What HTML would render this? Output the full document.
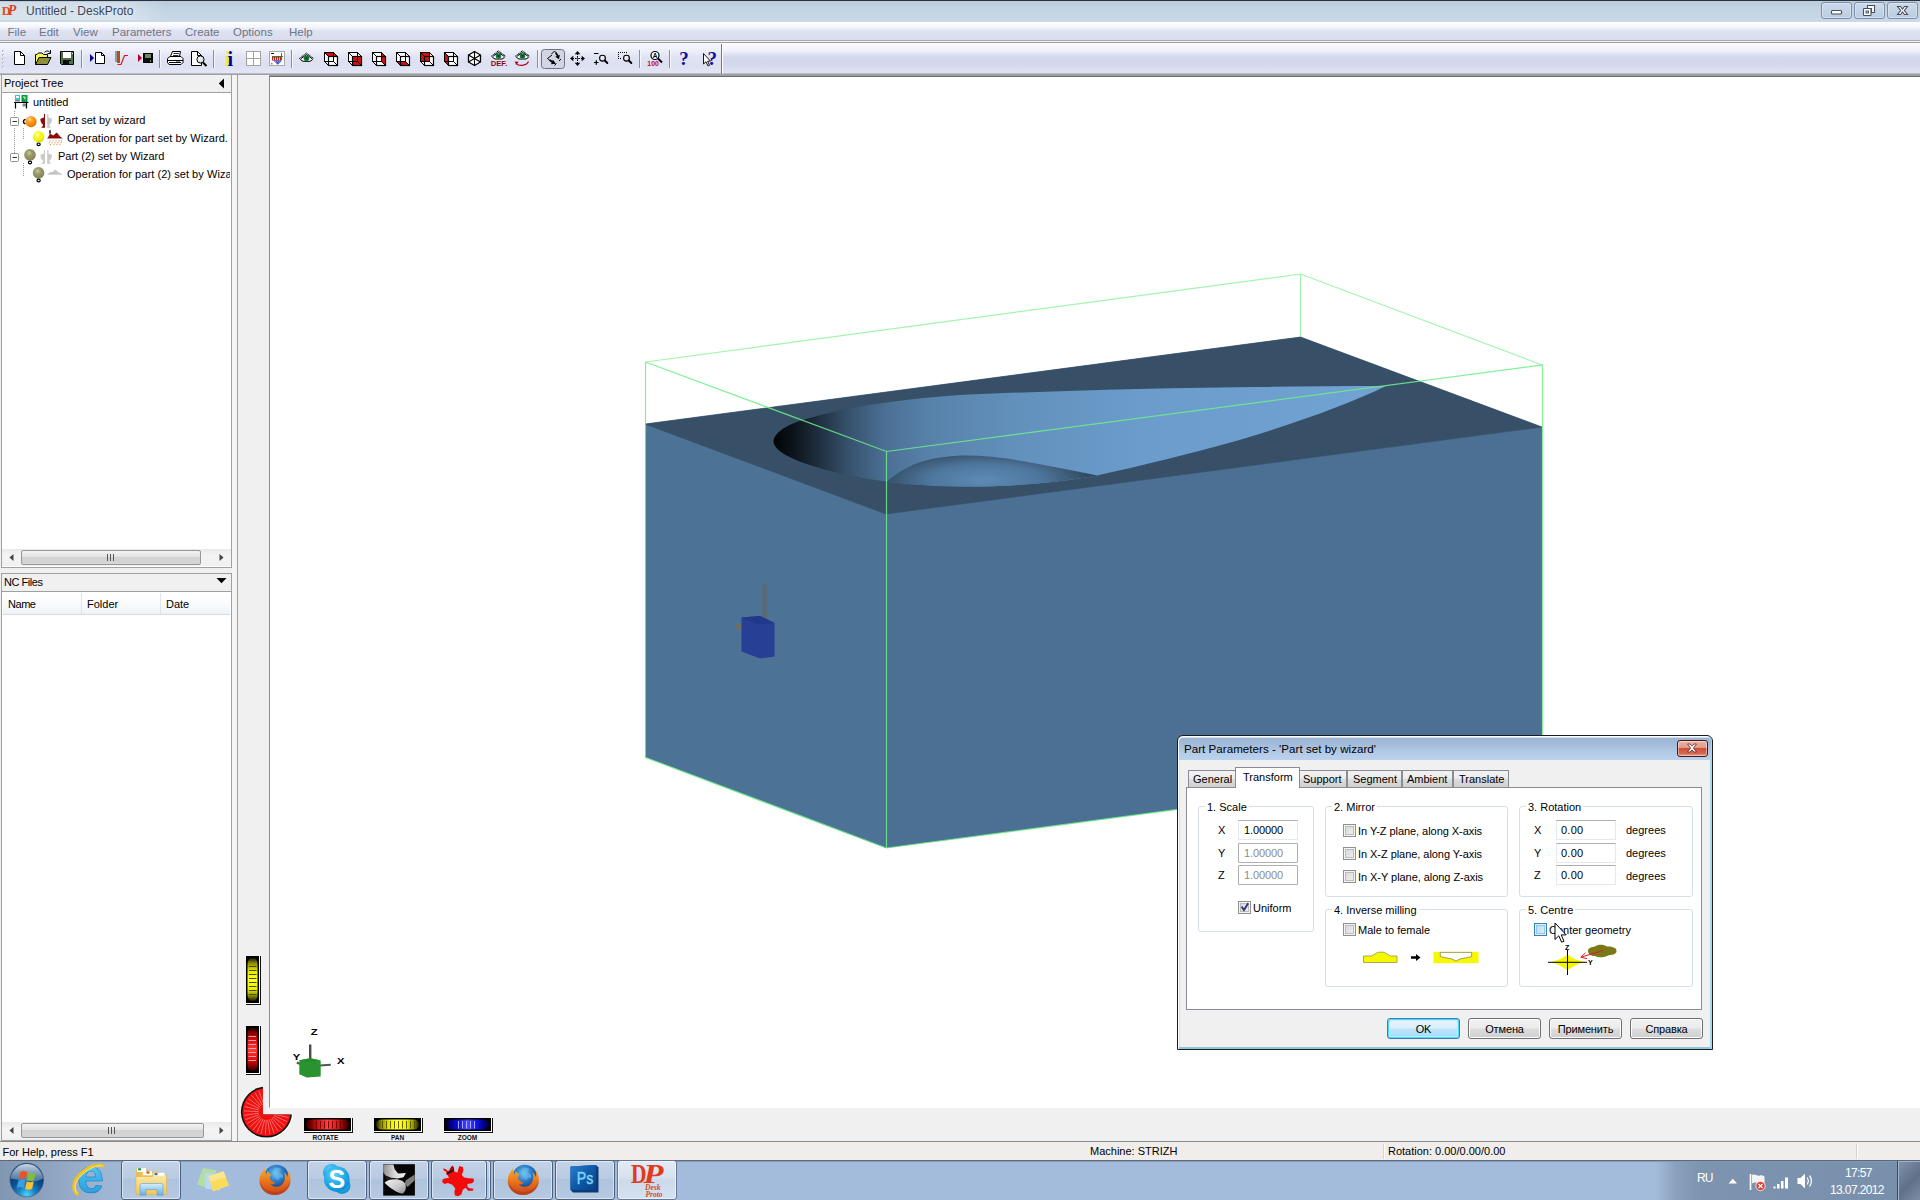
<!DOCTYPE html>
<html lang="en">
<head>
<meta charset="utf-8">
<title>Untitled - DeskProto</title>
<style>
html,body{margin:0;padding:0;}
body{width:1920px;height:1200px;overflow:hidden;background:#fff;font-family:"Liberation Sans",sans-serif;font-size:11px;color:#000;position:relative;}
.a{position:absolute;}
.t{position:absolute;white-space:pre;line-height:13px;}
svg{position:absolute;overflow:visible;}
/* title bar */
#titlebar{left:0;top:0;width:1920px;height:22px;background:linear-gradient(#2b313b 0,#2b313b 1px,#b9cbdd 1px,#c3d4e3 10px,#c9d9e7 21px);}
#title{left:26px;top:4px;font-size:12px;line-height:14px;color:#3a4658;text-shadow:0 0 3px #e8f0f8;}
.cap{position:absolute;top:2px;height:15px;width:29px;border:1px solid #7d8ea8;border-radius:3px;background:linear-gradient(#cbd9ea,#bccde2);box-shadow:inset 0 0 0 1px rgba(255,255,255,.35);}
/* menu */
#menubar{left:0;top:22px;width:1920px;height:18px;background:linear-gradient(#ffffff 0,#f4f5fc 5px,#dfe2f1 9px,#d9ddee 18px);}
.mi{top:26px;font-size:11.5px;color:#6f7686;}
#menuline{left:0;top:40px;width:1920px;height:3px;background:linear-gradient(#a9a9ae 0,#a9a9ae 1px,#f6f6fb 1px,#f6f6fb 2px,#9c9ca1 2px);}
/* toolbar */
#toolbar{left:0;top:43px;width:1920px;height:31px;background:linear-gradient(#fdfdff 0,#eef0fa 8px,#d3d8ec 14px,#d2d7ec 20px,#dfe3f3 30px);}
#tbshadow{left:0;top:73px;width:1920px;height:2px;background:linear-gradient(#b9bcc6 0,#b9bcc6 1px,#9fa1a7 1px);}
#tbleft{left:0;top:43px;width:721px;height:30px;background:linear-gradient(#f8f9fe 0,#eceef8 8px,#dfe2f2 15px,#dde0f1 23px,#e3e6f5 30px);}
.sep{position:absolute;top:49px;width:1px;height:20px;background:#8d909c;box-shadow:1px 0 0 #f4f5fb;}
/* left dock */
#dock{left:0;top:75px;width:238px;height:1067px;background:#f0f0f0;}
.pane{position:absolute;border:1px solid #a0a0a0;background:#fff;}
.phead{position:absolute;left:0;top:0;right:0;height:16px;background:#f0f0f0;border-bottom:1px solid #a0a0a0;}
/* view */
#viewframe{left:238px;top:75px;width:1682px;height:1067px;background:#f0f0f0;}
#view{left:269px;top:76px;width:1650px;height:1030px;background:#fff;border-left:1px solid #8c8c8c;border-top:1px solid #6e6e6e;border-bottom:1px solid #fff;box-shadow:0 -1px 0 0 #9a9da2;}
/* status bar */
#status{left:0;top:1141px;width:1920px;height:19px;background:#f1edeb;border-top:1px solid #8a8a8a;box-sizing:border-box;}
/* taskbar */
#taskbar{left:0;top:1160px;width:1920px;height:40px;background:linear-gradient(90deg,#8196b1 0,#8fa4c0 50px,#9db4d2 100px,#a4bcdb 150px,#a4bcdb 1655px,#8ba2bf 1675px,#7d94b0 1700px,#7990ac 1897px);}
#tbtop{left:0;top:1160px;width:1920px;height:2px;background:linear-gradient(#3c4a5c,#9db3cf);opacity:.9}
.tbtn{position:absolute;top:1163px;height:36px;width:58px;border:1px solid #6f87a6;border-radius:3px;background:linear-gradient(#c9d8ea,#b4c8e0 50%,#a9c0dc 51%,#b9cde4);box-shadow:inset 0 0 0 1px rgba(255,255,255,.55);}
</style>
</head>
<body>
<!-- ===== title bar ===== -->
<div id="titlebar" class="a"></div>
<div class="a" style="left:0;top:2px;width:170px;height:18px;background:linear-gradient(90deg,rgba(255,255,255,.3) 0,rgba(255,255,255,.32) 125px,rgba(255,255,255,0) 165px)"></div>
<div id="title" class="t">Untitled - DeskProto</div>
<div class="cap" style="left:1821px"></div>
<div class="cap" style="left:1854px"></div>
<div class="cap" style="left:1887px"></div>
<svg id="capglyphs" style="left:1820px;top:0" width="100" height="22" viewBox="1820 0 100 22">
<g fill="#fff" stroke="#47505f" stroke-width="1.100">
<rect x="1831.500" y="10.500" width="10" height="3.500" rx="1"/>
<path d="M1867.500 5.500H1874.500V12.500H1871.500V8.500H1867.500Z"/>
<rect x="1863.500" y="8.500" width="7.500" height="7" rx=".8"/><rect x="1866" y="11" width="2.500" height="2" fill="#c3d2e4" stroke-width=".9"/>
<path d="M1897.500 6.500H1900.500L1902.500 9L1904.500 6.500H1907.500L1904.300 10.500L1907.500 14.500H1904.500L1902.500 12L1900.500 14.500H1897.500L1900.700 10.500Z"/>
</g>
</svg>
<svg id="dpicon" style="left:0;top:2px" width="22" height="18" viewBox="0 2 22 18">
<g font-family="Liberation Serif, serif" font-weight="bold" fill="#e2441a">
<text x="1.800" y="15" font-size="12.500" fill="#d9531c">D</text>
<text x="7.800" y="15" font-size="14" font-style="italic" fill="#de3f1e">P</text>
</g>
</svg>
<!-- ===== menu ===== -->
<div id="menubar" class="a"></div>
<div class="t mi" style="left:7.500px">File</div>
<div class="t mi" style="left:39px">Edit</div>
<div class="t mi" style="left:73px">View</div>
<div class="t mi" style="left:112px">Parameters</div>
<div class="t mi" style="left:185px">Create</div>
<div class="t mi" style="left:233px">Options</div>
<div class="t mi" style="left:289px">Help</div>
<div id="menuline" class="a"></div>
<!-- ===== toolbar ===== -->
<div id="toolbar" class="a"></div>
<div id="tbleft" class="a"></div>
<div id="tbshadow" class="a"></div>
<!--TBI-START-->
<svg id="tbi" style="left:0;top:43px" width="740" height="32" viewBox="0 43 740 32">
<defs><radialGradient id="lens" cx=".35" cy=".3" r=".8"><stop offset="0" stop-color="#fff"/><stop offset="1" stop-color="#c8c8d0"/></radialGradient></defs>
<g fill="#b9bccb"><rect x="2" y="50" width="2" height="2"/><rect x="2" y="54" width="2" height="2"/><rect x="2" y="58" width="2" height="2"/><rect x="2" y="62" width="2" height="2"/><rect x="2" y="66" width="2" height="2"/></g>
<g fill="#fff"><rect x="3" y="51" width="1" height="1"/><rect x="3" y="55" width="1" height="1"/><rect x="3" y="59" width="1" height="1"/><rect x="3" y="63" width="1" height="1"/><rect x="3" y="67" width="1" height="1"/></g>
<path d="M81.5 50V68" stroke="#8c8f9c" stroke-width="1"/><path d="M82.5 50V68" stroke="#f5f6fb" stroke-width="1"/>
<path d="M159.5 50V68" stroke="#8c8f9c" stroke-width="1"/><path d="M160.5 50V68" stroke="#f5f6fb" stroke-width="1"/>
<path d="M213.5 50V68" stroke="#8c8f9c" stroke-width="1"/><path d="M214.5 50V68" stroke="#f5f6fb" stroke-width="1"/>
<path d="M291.5 50V68" stroke="#8c8f9c" stroke-width="1"/><path d="M292.5 50V68" stroke="#f5f6fb" stroke-width="1"/>
<path d="M537.5 50V68" stroke="#8c8f9c" stroke-width="1"/><path d="M538.5 50V68" stroke="#f5f6fb" stroke-width="1"/>
<path d="M639.5 50V68" stroke="#8c8f9c" stroke-width="1"/><path d="M640.5 50V68" stroke="#f5f6fb" stroke-width="1"/>
<path d="M669.5 50V68" stroke="#8c8f9c" stroke-width="1"/><path d="M670.5 50V68" stroke="#f5f6fb" stroke-width="1"/>
<path d="M721.5 44V74" stroke="#77797f" stroke-width="1"/><path d="M722.5 44V74" stroke="#fff" stroke-width="1"/>
<rect x="541.5" y="49.500" width="23" height="19" rx="3" fill="#d2d5e4" stroke="#6e7282" stroke-width="1"/>
<g shape-rendering="crispEdges">
<path d="M14.5 51.5H20.5L24.5 55.5V64.5H14.5Z" fill="#fff" stroke="#000" stroke-width="1" shape-rendering="auto"/><path d="M20.5 51.5V55.5H24.5" fill="none" stroke="#000" stroke-width="1" shape-rendering="auto"/>
<path d="M35.500 64.500V54.500H37L38.500 53H42L43.500 54.500H47.500V57" fill="#f6f650" stroke="#000" stroke-width="1" shape-rendering="auto"/>
<path d="M35.500 64.500L39 57.500H51L47.500 64.500Z" fill="#8e8e3a" stroke="#000" stroke-width="1" shape-rendering="auto"/>
<path d="M44.500 52.500C46 50.500 48.500 50.500 50 52.500M50.500 50V53.500H47.500" fill="none" stroke="#000" stroke-width="1" shape-rendering="auto"/>
<path d="M60.500 51.500H73.500V64.500H61.500L60.500 63.500Z" fill="#4c7048" stroke="#000" stroke-width="1" shape-rendering="auto"/>
<rect x="63" y="52" width="8" height="6" fill="#fff"/><rect x="63" y="60" width="8" height="5" fill="#0a0a0a"/><rect x="69" y="61" width="1.500" height="3" fill="#4c7048"/><rect x="72" y="52.500" width="1" height="1.500" fill="#dfe8df"/>
<polygon points="90,54 90,62 94,58" fill="#00009a" shape-rendering="auto"/>
<path d="M95.5 52.5H101.5L104.5 55.5V63.5H95.5Z" fill="#fff" stroke="#000" stroke-width="1" shape-rendering="auto"/><path d="M101.5 52.5V55.5H104.5" fill="none" stroke="#000" stroke-width="1" shape-rendering="auto"/>
<rect x="115" y="51" width="2" height="11" fill="#9a9a98"/><rect x="117" y="51" width="2.500" height="12" fill="#a8531e"/>
<path d="M117.500 64.500H121L124.500 55.500H128" fill="none" stroke="#e01030" stroke-width="1.200" shape-rendering="auto"/>
<polygon points="138,54 138,62 142,58" fill="#c00020" shape-rendering="auto"/>
<rect x="143.500" y="53.500" width="9" height="9" fill="#0c0c0c" stroke="#000" stroke-width="1"/><rect x="145" y="54" width="6" height="4" fill="#6a8a66"/><rect x="150" y="60" width="1" height="2" fill="#6a8a66"/>
<path d="M170.500 56.500L172.500 51.500H180.500L179.500 56.500" fill="#fff" stroke="#000" stroke-width="1" shape-rendering="auto"/><path d="M173.500 53.500H179M173 55.500H178.500" stroke="#000" stroke-width=".8" shape-rendering="auto"/>
<path d="M167.500 58.500L170 56.500H181L183 58.500V62.500L181 64.500H169L167.500 62.500Z" fill="#fff" stroke="#000" stroke-width="1" shape-rendering="auto"/><path d="M167.500 60.500H182.500M169 62.500H181" stroke="#000" stroke-width="1"/><rect x="176" y="61" width="4" height="1" fill="#9a9a9a"/>
<path d="M191.5 51.5H197.5L201.5 55.5V65.5H191.5Z" fill="#fff" stroke="#000" stroke-width="1" shape-rendering="auto"/><path d="M197.5 51.5V55.5H201.5" fill="none" stroke="#000" stroke-width="1" shape-rendering="auto"/>
<circle cx="200.500" cy="59.500" r="3.600" fill="url(#lens)" stroke="#000" stroke-width="1" shape-rendering="auto"/><path d="M203 62.500L206.500 66" stroke="#000" stroke-width="2" shape-rendering="auto"/>
</g>
<text x="225.200" y="65.500" font-family="Liberation Serif, serif" font-weight="bold" font-size="20" fill="#f4f400">i</text>
<text x="227.600" y="65.500" font-family="Liberation Serif, serif" font-weight="bold" font-size="20" fill="#00009a">i</text>
<rect x="246.500" y="51.500" width="14" height="14" fill="#fff" stroke="#a3a3a3" stroke-width="1"/><path d="M253.500 51.500V65.500M246.500 58.500H260.500" stroke="#a3a3a3" stroke-width="1"/>
<rect x="269.500" y="51.500" width="15" height="14" fill="#fff" stroke="#a8a8a8" stroke-width="1"/>
<rect x="271" y="53" width="3" height="1" fill="#111"/><path d="M272 56.500H283M281.500 53V60" stroke="#1a8a2a" stroke-width="1"/>
<rect x="272" y="57" width="9" height="3.500" fill="#d01818"/><path d="M273.500 57.500V60M275.500 57.500V60M277.500 57.500V60M279.500 57.500V60" stroke="#fff" stroke-width=".8"/>
<polygon points="273.500,60.500 282,60.500 277.800,64.800" fill="#2848c8"/><path d="M275 61.500H281M276 62.700H280" stroke="#cfe0ff" stroke-width=".6" stroke-dasharray="1 1"/><rect x="271" y="63" width="1.500" height="1.500" fill="#9a8a3a"/>
<path d="M300.7 58.9L306.5 54.699999999999996L312.3 58.9L310.0 61.3H303.0Z" fill="#fff"/><path d="M299.2 58.599999999999994L306.5 53.099999999999994L313.8 58.599999999999994" fill="none" stroke="#000" stroke-width="1" stroke-dasharray="1.2 .6"/><path d="M300.6 58.9L306.5 54.599999999999994L312.4 58.9" fill="none" stroke="#000" stroke-width="1"/><path d="M300.3 59.5L303.0 61.3H310.0L312.7 59.5" fill="none" stroke="#000" stroke-width="1"/><circle cx="306.5" cy="58.3" r="2.800" fill="#0b7a35"/><circle cx="306.5" cy="58.3" r="1" fill="#033a18"/>
<polygon points="324.5,52.5 333.5,52.5 337.5,56.5 337.5,65.5 328.5,65.5 324.5,61.5" fill="#fff"/><polygon points="324.5,52.5 333.5,52.5 337.5,56.5 328.5,56.5" fill="#d01010"/><g fill="none" stroke="#000" stroke-width="1.200"><rect x="324.5" y="52.5" width="9" height="9" stroke-width="1"/><rect x="328.5" y="56.5" width="9" height="9"/><path d="M324.5 52.5L328.5 56.5M333.5 52.5L337.5 56.5M324.5 61.5L328.5 65.5M333.5 61.5L337.5 65.5" stroke-width="1"/></g>
<polygon points="348.5,52.5 357.5,52.5 361.5,56.5 361.5,65.5 352.5,65.5 348.5,61.5" fill="#fff"/><polygon points="352.5,56.5 361.5,56.5 361.5,65.5 352.5,65.5" fill="#d01010"/><g fill="none" stroke="#000" stroke-width="1.200"><rect x="348.5" y="52.5" width="9" height="9" stroke-width="1"/><rect x="352.5" y="56.5" width="9" height="9"/><path d="M348.5 52.5L352.5 56.5M357.5 52.5L361.5 56.5M348.5 61.5L352.5 65.5M357.5 61.5L361.5 65.5" stroke-width="1"/></g>
<polygon points="372.5,52.5 381.5,52.5 385.5,56.5 385.5,65.5 376.5,65.5 372.5,61.5" fill="#fff"/><polygon points="381.5,52.5 385.5,56.5 385.5,65.5 381.5,61.5" fill="#d01010"/><g fill="none" stroke="#000" stroke-width="1.200"><rect x="372.5" y="52.5" width="9" height="9" stroke-width="1"/><rect x="376.5" y="56.5" width="9" height="9"/><path d="M372.5 52.5L376.5 56.5M381.5 52.5L385.5 56.5M372.5 61.5L376.5 65.5M381.5 61.5L385.5 65.5" stroke-width="1"/></g>
<polygon points="396.5,52.5 405.5,52.5 409.5,56.5 409.5,65.5 400.5,65.5 396.5,61.5" fill="#fff"/><polygon points="396.5,61.5 405.5,61.5 409.5,65.5 400.5,65.5" fill="#d01010"/><g fill="none" stroke="#000" stroke-width="1.200"><rect x="396.5" y="52.5" width="9" height="9" stroke-width="1"/><rect x="400.5" y="56.5" width="9" height="9"/><path d="M396.5 52.5L400.5 56.5M405.5 52.5L409.5 56.5M396.5 61.5L400.5 65.5M405.5 61.5L409.5 65.5" stroke-width="1"/></g>
<polygon points="420.5,52.5 429.5,52.5 433.5,56.5 433.5,65.5 424.5,65.5 420.5,61.5" fill="#fff"/><polygon points="420.5,52.5 429.5,52.5 429.5,61.5 420.5,61.5" fill="#d01010"/><g fill="none" stroke="#000" stroke-width="1.200"><rect x="420.5" y="52.5" width="9" height="9" stroke-width="1"/><rect x="424.5" y="56.5" width="9" height="9"/><path d="M420.5 52.5L424.5 56.5M429.5 52.5L433.5 56.5M420.5 61.5L424.5 65.5M429.5 61.5L433.5 65.5" stroke-width="1"/></g>
<polygon points="444.5,52.5 453.5,52.5 457.5,56.5 457.5,65.5 448.5,65.5 444.5,61.5" fill="#fff"/><polygon points="444.5,52.5 448.5,56.5 448.5,65.5 444.5,61.5" fill="#d01010"/><g fill="none" stroke="#000" stroke-width="1.200"><rect x="444.5" y="52.5" width="9" height="9" stroke-width="1"/><rect x="448.5" y="56.5" width="9" height="9"/><path d="M444.5 52.5L448.5 56.5M453.5 52.5L457.5 56.5M444.5 61.5L448.5 65.5M453.5 61.5L457.5 65.5" stroke-width="1"/></g>
<polygon points="474.5,51.5 480.5,55.0 480.5,62.0 474.5,65.5 468.5,62.0 468.5,55.0" fill="#fff" stroke="#000" stroke-width="1.300"/><path d="M474.5 51.5V65.5M468.5 55.0L480.5 62.0M480.5 55.0L468.5 62.0" stroke="#000" stroke-width="1.100"/>
<path d="M492.7 56.6L498.5 52.4L504.3 56.6L502.0 59H495.0Z" fill="#fff"/><path d="M491.2 56.3L498.5 50.8L505.8 56.3" fill="none" stroke="#000" stroke-width="1" stroke-dasharray="1.2 .6"/><path d="M492.6 56.6L498.5 52.3L504.4 56.6" fill="none" stroke="#000" stroke-width="1"/><path d="M492.3 57.2L495.0 59H502.0L504.7 57.2" fill="none" stroke="#000" stroke-width="1"/><circle cx="498.5" cy="56" r="2.800" fill="#0b7a35"/><circle cx="498.5" cy="56" r="1" fill="#033a18"/>
<text x="490.800" y="66" font-family="Liberation Sans, sans-serif" font-weight="bold" font-size="6.600" fill="#8a0a14" textLength="16.500" lengthAdjust="spacingAndGlyphs">DEF.</text>
<path d="M516.7 56.6L522.5 52.4L528.3 56.6L526.0 59H519.0Z" fill="#fff"/><path d="M515.2 56.3L522.5 50.8L529.8 56.3" fill="none" stroke="#000" stroke-width="1" stroke-dasharray="1.2 .6"/><path d="M516.6 56.6L522.5 52.3L528.4 56.6" fill="none" stroke="#000" stroke-width="1"/><path d="M516.3 57.2L519.0 59H526.0L528.7 57.2" fill="none" stroke="#000" stroke-width="1"/><circle cx="522.5" cy="56" r="2.800" fill="#0b7a35"/><circle cx="522.5" cy="56" r="1" fill="#033a18"/>
<path d="M516.500 63.500C518 66 526 66.500 528.500 61.500" fill="none" stroke="#b00a20" stroke-width="1.300"/><polygon points="514.800,61.500 518.800,61.800 516,65" fill="#b00a20"/>
<g fill="none" stroke="#000" stroke-width="1"><path d="M554.500 51L551.500 54M554.500 51L556 52.800M552 55L547.500 58.500L549.500 60.200M554.500 65.500L556.500 63.500M559 61L561 59"/></g>
<path d="M555.800 52.800L557.800 56" stroke="#000" stroke-width="1.800"/><polygon points="555.300,56.800 559.800,54.800 559,59.300" fill="#000"/>
<path d="M549.500 60L552.500 62" stroke="#000" stroke-width="1.800"/><polygon points="552.800,59.800 556,63.800 551,64.300" fill="#000"/>
<g fill="#000" shape-rendering="crispEdges"><rect x="573" y="58" width="1" height="1"/><rect x="577" y="54" width="1" height="1"/><rect x="575" y="58" width="1" height="1"/><rect x="577" y="56" width="1" height="1"/><rect x="579" y="58" width="1" height="1"/><rect x="577" y="60" width="1" height="1"/><rect x="581" y="58" width="1" height="1"/><rect x="577" y="62" width="1" height="1"/><rect x="576" y="58" width="3" height="1" fill="#444"/><rect x="577" y="57" width="1" height="3" fill="#444"/></g>
<polygon points="577.5,51.0 574.7,54.3 580.3,54.3" fill="#000"/><polygon points="577.5,66.0 574.7,62.7 580.3,62.7" fill="#000"/><polygon points="570.0,58.5 573.3,55.7 573.3,61.3" fill="#000"/><polygon points="585.0,58.5 581.7,55.7 581.7,61.3" fill="#000"/>
<path d="M594 53.500H598.500M594 62.500H598.500M596.300 60.200V64.800" stroke="#000" stroke-width="1.200"/><circle cx="602.500" cy="58.200" r="2.900" fill="url(#lens)" stroke="#000" stroke-width="1.100"/><path d="M604.800 60.500L607.300 63" stroke="#000" stroke-width="2" stroke-linecap="round"/>
<g fill="#000" shape-rendering="crispEdges"><rect x="618" y="52" width="1" height="1"/><rect x="620" y="52" width="1" height="1"/><rect x="622" y="52" width="1" height="1"/><rect x="624" y="52" width="1" height="1"/><rect x="626" y="52" width="1" height="1"/><rect x="618" y="54" width="1" height="1"/><rect x="618" y="56" width="1" height="1"/><rect x="618" y="58" width="1" height="1"/><rect x="620" y="58" width="1" height="1"/></g><circle cx="626.500" cy="58.200" r="2.900" fill="url(#lens)" stroke="#000" stroke-width="1.100"/><path d="M628.800 60.500L631.300 63" stroke="#000" stroke-width="2" stroke-linecap="round"/>
<circle cx="655" cy="55.500" r="4" fill="#fff" stroke="#000" stroke-width="1.200"/><text x="652.800" y="58.300" font-family="Liberation Sans, sans-serif" font-weight="bold" font-size="6.500" fill="#000">A</text><path d="M658 58.500L662 62.500" stroke="#000" stroke-width="2"/>
<text x="647.300" y="66" font-family="Liberation Sans, sans-serif" font-size="6.300" font-weight="bold" fill="#c0102a" textLength="11.500" lengthAdjust="spacingAndGlyphs">100</text>
<text x="679.200" y="65.300" font-family="Liberation Serif, serif" font-weight="bold" font-size="19" fill="#10109a">?</text>
<text x="707.600" y="65.300" font-family="Liberation Serif, serif" font-weight="bold" font-size="19" fill="#10109a">?</text>
<path d="M703.500 53.500V64L706 61.800L708 66L709.500 65.300L707.600 61.200H710.500Z" fill="#fff" stroke="#000" stroke-width=".9"/>
</svg>
<!--TBI-END-->
<!-- ===== left dock ===== -->
<div id="dock" class="a"></div>
<!--DOCK-START-->
<!-- project tree pane -->
<div class="pane" style="left:1px;top:74px;width:229px;height:492px"></div>
<div class="a" style="left:2px;top:75px;width:229px;height:17px;background:#f0f0f0;border-bottom:1px solid #a0a0a0"></div>
<div class="t" style="left:4px;top:77px">Project Tree</div>
<svg style="left:218px;top:78px" width="8" height="11"><polygon points="6,0.5 6,10.5 0.8,5.5" fill="#000"/></svg>
<!-- tree lines -->
<svg style="left:0;top:95px" width="231" height="100">
<g stroke="#9a9a9a" stroke-width="1" stroke-dasharray="1 1" fill="none">
<path d="M14.5 16V22M14.5 33V58M23.5 33V45M23.5 68V81"/>
</g>
<g fill="#fff" stroke="#919191"><rect x="10.5" y="22.5" width="8" height="8" rx="1"/><rect x="10.5" y="58.5" width="8" height="8" rx="1"/></g>
<path d="M12.5 26.5H17M12.5 62.5H17" stroke="#333" stroke-width="1"/>
</svg>
<!--TI-START-->
<svg style="left:0;top:90px" width="70" height="100" viewBox="0 0 70 100">
<defs>
<radialGradient id="gor" cx=".38" cy=".3" r=".75"><stop offset="0" stop-color="#ffe2b8"/><stop offset=".3" stop-color="#ffa030"/><stop offset=".7" stop-color="#fb8500"/><stop offset="1" stop-color="#d96a00"/></radialGradient>
<radialGradient id="gye" cx=".4" cy=".32" r=".75"><stop offset="0" stop-color="#ffffd0"/><stop offset=".3" stop-color="#fbfb30"/><stop offset=".75" stop-color="#f0f000"/><stop offset="1" stop-color="#b8b800"/></radialGradient>
<radialGradient id="gol" cx=".42" cy=".35" r=".75"><stop offset="0" stop-color="#c9c9a0"/><stop offset=".35" stop-color="#9a9a68"/><stop offset=".8" stop-color="#86865a"/><stop offset="1" stop-color="#77774e"/></radialGradient>
</defs>
<!-- project icon -->
<path d="M14 12.5H28.5M15.5 12.5V18.5M26.5 12.5V18.5" stroke="#000" stroke-width="1.2" fill="none"/>
<rect x="15" y="5" width="5" height="5" fill="#35c5d8"/><rect x="16" y="6" width="3" height="2" fill="#e8ffff"/><rect x="15" y="10" width="5" height="1.6" fill="#8a8a8a"/>
<rect x="21.5" y="5" width="6" height="7" fill="#0a9a3c"/><path d="M23 7H25V9.5" stroke="#e8fff0" stroke-width="1" fill="none"/>
<rect x="22.5" y="13.5" width="3.5" height="3" fill="#7d8a8a"/>
<!-- row2 icons -->
<path d="M25.5 29.3A2 2.2 0 1 0 25.5 33.7" stroke="#000" stroke-width="1.3" fill="none"/>
<circle cx="31" cy="31.6" r="5.6" fill="url(#gor)"/>
<path d="M45 24V37.8H41.2L43 35.6C43.2 34.5 42 34 41.5 33C40.5 31.5 40.3 30 40.5 28.8L44 27.6V24Z" fill="#8e0a0a"/>
<path d="M47.2 24V37.8H51L49.4 35.6C49.2 34.5 50.4 34 50.9 33C51.9 31.5 52.1 30 51.9 28.8L48.4 27.6V24Z" fill="#c6c6c6"/>
<!-- row3 icons -->
<circle cx="38.6" cy="46.8" r="5.7" fill="url(#gye)"/>
<ellipse cx="38.6" cy="54.3" rx="1.6" ry="1.3" fill="none" stroke="#000" stroke-width="1.2"/>
<rect x="49.3" y="40.2" width="1.4" height="3.4" fill="#000"/>
<path d="M47.200 48.600L48.500 46.500L50 43.500L51.500 44.500L53.300 45.600L55 44L56.700 42.400L58.500 44.500L60 46.500L61.500 47.500L62.800 48.600Z" fill="#8e0a0a"/>
<path d="M49.5 50.8H50.5M52.5 50.8H53.5M55.5 50.8H56.5M58.5 50.8H59.5M61 50.8H62M48.8 52.8H49.8M51.5 52.8H52.5M54.5 52.8H55.5M57.5 52.8H58.5M60.5 52.8H61.5M50 54.6H51M53.5 54.6H54.5M56.5 54.6H57.5M59.5 54.6H60.5" stroke="#d8842a" stroke-width="1"/>
<!-- row4 icons -->
<circle cx="30" cy="64.9" r="5.8" fill="url(#gol)"/>
<ellipse cx="30" cy="72.5" rx="1.6" ry="1.3" fill="none" stroke="#000" stroke-width="1.2"/>
<path d="M45 60V73.8H41.2L43 71.6C43.2 70.5 42 70 41.5 69C40.5 67.5 40.3 66 40.5 64.8L44 63.6V60Z" fill="#cbcbcb"/>
<path d="M47.2 60V73.8H51L49.4 71.6C49.2 70.5 50.4 70 50.9 69C51.9 67.5 52.1 66 51.9 64.8L48.4 63.6V60Z" fill="#cbcbcb"/>
<!-- row5 icons -->
<circle cx="38.6" cy="82.9" r="5.8" fill="url(#gol)"/>
<ellipse cx="38.6" cy="90.5" rx="1.6" ry="1.3" fill="none" stroke="#000" stroke-width="1.2"/>
<path d="M47.200 84.800L49 83L50.500 82L52.500 82L54 80.800L55.500 79.600L57 81L58.500 82.300L60 83L61.500 84L62.800 84.800Z" fill="#c6c6c6"/>
</svg>
<!--TI-END-->
<div class="t" style="left:33px;top:96px">untitled</div>
<div class="t" style="left:58px;top:114px">Part set by wizard</div>
<div class="t" style="left:67px;top:132px;letter-spacing:.06px">Operation for part set by Wizard.</div>
<div class="t" style="left:58px;top:150px">Part (2) set by Wizard</div>
<div class="a" style="left:67px;top:168px;width:163px;height:14px;overflow:hidden"><div class="t" style="left:0;top:0;letter-spacing:.06px">Operation for part (2) set by Wizard.</div></div>
<!-- h scrollbar 1 -->
<div class="a hsb" style="left:2px;top:549px;width:229px;height:17px;background:linear-gradient(#e9e9e9,#f4f4f4 40%,#f0f0f0)"></div>
<div class="a" style="left:21px;top:550px;width:178px;height:13px;border:1px solid #979797;border-radius:2px;background:linear-gradient(#f2f2f2,#e3e3e3 45%,#d2d2d2 50%,#d6d6d6)"></div>
<svg style="left:0;top:549px" width="231" height="17"><polygon points="13.500,5 13.500,12 9.500,8.500" fill="#444"/><polygon points="219.500,5 219.500,12 223.500,8.500" fill="#444"/><path d="M107.5 5V12M110.5 5V12M113.5 5V12" stroke="#555" stroke-width="1"/></svg>
<!-- NC files pane -->
<div class="pane" style="left:1px;top:573px;width:229px;height:566px"></div>
<div class="a" style="left:2px;top:574px;width:229px;height:17px;background:#f0f0f0;border-bottom:1px solid #a0a0a0"></div>
<div class="t" style="left:4px;top:576px;letter-spacing:-.45px">NC Files</div>
<svg style="left:216px;top:577px" width="12" height="8"><polygon points="0.5,1 10.5,1 5.5,6.2" fill="#000"/></svg>
<div class="a" style="left:3px;top:593px;width:227px;height:21px;background:linear-gradient(#fff,#fafbfd 50%,#eef2f8);border-bottom:1px solid #d8dbe0"></div>
<div class="a" style="left:81px;top:593px;width:1px;height:21px;background:#e0e3e8"></div>
<div class="a" style="left:160px;top:593px;width:1px;height:21px;background:#e0e3e8"></div>
<div class="t" style="left:8px;top:598px;letter-spacing:-.45px">Name</div>
<div class="t" style="left:87px;top:598px">Folder</div>
<div class="t" style="left:166px;top:598px">Date</div>
<!-- h scrollbar 2 -->
<div class="a" style="left:2px;top:1122px;width:229px;height:18px;background:linear-gradient(#e9e9e9,#f4f4f4 40%,#f0f0f0)"></div>
<div class="a" style="left:21px;top:1123px;width:181px;height:13px;border:1px solid #979797;border-radius:2px;background:linear-gradient(#f2f2f2,#e3e3e3 45%,#d2d2d2 50%,#d6d6d6)"></div>
<svg style="left:0;top:1122px" width="231" height="17"><polygon points="13.500,5 13.500,12 9.500,8.500" fill="#444"/><polygon points="219.500,5 219.500,12 223.500,8.500" fill="#444"/><path d="M108.5 5V12M111.5 5V12M114.5 5V12" stroke="#555" stroke-width="1"/></svg>
<!-- splitter edge -->
<div class="a" style="left:232px;top:75px;width:5px;height:1067px;background:#f4f4f4"></div>
<div class="a" style="left:237px;top:75px;width:1px;height:1067px;background:#a0a0a0"></div>
<!--DOCK-END-->
<!-- ===== view ===== -->
<div id="viewframe" class="a"></div>
<div id="view" class="a"></div>
<!--MODEL-START-->
<svg id="model" style="left:0;top:0" width="1920" height="1200" viewBox="0 0 1920 1200">
<defs>
<linearGradient id="gpk" gradientUnits="userSpaceOnUse" x1="773" y1="0" x2="1390" y2="0">
<stop offset="0" stop-color="#000306"/><stop offset="0.03" stop-color="#0b1219"/><stop offset="0.07" stop-color="#1d2c3b"/><stop offset="0.12" stop-color="#35506b"/><stop offset="0.18" stop-color="#4a6f93"/><stop offset="0.25" stop-color="#5781a9"/><stop offset="0.4" stop-color="#6391bd"/><stop offset="0.6" stop-color="#6b9ccb"/><stop offset="1" stop-color="#71a3d3"/>
</linearGradient>
<radialGradient id="gbump" gradientUnits="userSpaceOnUse" cx="985" cy="480" r="110" gradientTransform="translate(985 480) scale(1 0.28) translate(-985 -480)">
<stop offset="0" stop-color="#5d8ab5"/><stop offset="0.5" stop-color="#4f779e"/><stop offset="0.85" stop-color="#38556f"/><stop offset="1" stop-color="#2c4358"/>
</radialGradient>
</defs>
<!-- back bbox lines (behind solid) -->
<g fill="none" stroke="#86f094" stroke-width="1.200" opacity=".75">
<path d="M645.5 362L1300.5 274L1542 365M1300.5 274V337"/>
</g>
<!-- solid faces -->
<polygon points="645,424 1300.5,337 1542,427 1542,761 886,848 645,757" fill="#4b7195"/>
<polygon points="645,424 886,514 886,848 645,757" fill="#4c7296"/>
<polygon points="886,514 1542,427 1542,761 886,848" fill="#4b7094"/>
<polygon points="645,424 1300.5,337 1542,427 886,514" fill="#375068" stroke="#375068" stroke-width=".6"/>
<!-- pocket -->
<path d="M773.5 441 C775 431 790 423 810 418 C848 407 900 399 960 395 C1080 389.5 1230 386.3 1386 386 C1350 403.500 1300 422 1236 441 C1190 454 1140 466 1097 475.5 C1060 482 1030 485 985 486.5 C950 487 915 485.5 886 481.5 C840 475 800 465 781 452 C776 448 773.5 445 773.5 441Z" fill="url(#gpk)"/>
<!-- bump -->
<path d="M887 481.5 C895 474 905 468 919 462.5 C935 457.5 950 455.5 966 455.5 C985 455.5 1005 458 1025 461.5 C1050 466 1075 471 1097 475.5 C1060 482 1030 485 985 486.5 C950 487 915 485.5 887 481.5Z" fill="url(#gbump)"/>
<!-- small blue tool -->
<rect x="762.5" y="584" width="4" height="35" fill="#5b6971"/>
<rect x="736" y="624" width="6" height="5" fill="#6d6c66"/>
<polygon points="741.5,617.5 760,616 774.5,623 774.5,656.5 760,658.5 741.5,651.5" fill="#273f95"/>
<polygon points="741.5,617.5 760,616 774.5,623 757,624.5" fill="#22388a"/>
<!-- front bbox lines -->
<g fill="none" stroke="#6fee88" stroke-width="1.200" opacity=".85">
<path d="M645.5 362V757.5L886.5 848L1542.5 761V365L886.5 451.5L645.5 362M886.5 451.5V848"/>
</g>
</svg>
<!--MODEL-END-->
<!--WHEELS-START-->
<svg id="wheels" style="left:0;top:0" width="1920" height="1200" viewBox="0 0 1920 1200">
<defs>
<linearGradient id="wyv" x1="0" y1="0" x2="0" y2="1"><stop offset="0" stop-color="#1a1a00"/><stop offset=".12" stop-color="#8a8a00"/><stop offset=".3" stop-color="#e8e800"/><stop offset=".5" stop-color="#ffff30"/><stop offset=".72" stop-color="#f0f000"/><stop offset=".88" stop-color="#8a8a00"/><stop offset="1" stop-color="#1a1a00"/></linearGradient>
<linearGradient id="wrv" x1="0" y1="0" x2="0" y2="1"><stop offset="0" stop-color="#2a0000"/><stop offset=".12" stop-color="#8a0000"/><stop offset=".3" stop-color="#e01010"/><stop offset=".5" stop-color="#ff3a3a"/><stop offset=".72" stop-color="#e81010"/><stop offset=".88" stop-color="#8a0000"/><stop offset="1" stop-color="#2a0000"/></linearGradient>
<linearGradient id="wyh" x1="0" y1="0" x2="1" y2="0"><stop offset="0" stop-color="#1a1a00"/><stop offset=".12" stop-color="#8a8a00"/><stop offset=".3" stop-color="#e8e800"/><stop offset=".5" stop-color="#ffff30"/><stop offset=".72" stop-color="#f0f000"/><stop offset=".88" stop-color="#8a8a00"/><stop offset="1" stop-color="#1a1a00"/></linearGradient>
<linearGradient id="wrh" x1="0" y1="0" x2="1" y2="0"><stop offset="0" stop-color="#2a0000"/><stop offset=".12" stop-color="#7a0000"/><stop offset=".3" stop-color="#d81818"/><stop offset=".5" stop-color="#ff4040"/><stop offset=".72" stop-color="#e01818"/><stop offset=".88" stop-color="#7a0000"/><stop offset="1" stop-color="#2a0000"/></linearGradient>
<linearGradient id="wbh" x1="0" y1="0" x2="1" y2="0"><stop offset="0" stop-color="#00002a"/><stop offset=".12" stop-color="#00008a"/><stop offset=".3" stop-color="#1010e0"/><stop offset=".5" stop-color="#4a4aff"/><stop offset=".72" stop-color="#1010e8"/><stop offset=".88" stop-color="#00008a"/><stop offset="1" stop-color="#00002a"/></linearGradient>
<clipPath id="dialclip"><path d="M230 1080H263V1114.4H300V1145H230Z"/></clipPath>
</defs>
<!-- vertical yellow wheel -->
<rect x="246" y="956" width="15" height="49" fill="#111"/><rect x="246" y="956" width="14" height="48" fill="#fff"/><rect x="246" y="956" width="13" height="47" fill="#000"/>
<rect x="247.5" y="958" width="10" height="43" rx="4" ry="6" fill="url(#wyv)"/>
<path d="M249 966.5H256.5M249 970.5H256.5M249 974.5H256.5M249 978.5H256.5M249 982.5H256.5M249 986.5H256.5M249 990.5H256.5M249 994.5H256.5" stroke="#4a4a00" stroke-width="1"/>
<!-- vertical red wheel -->
<rect x="246" y="1026" width="15" height="49" fill="#111"/><rect x="246" y="1026" width="14" height="48" fill="#fff"/><rect x="246" y="1026" width="13" height="47" fill="#000"/>
<rect x="247.5" y="1028" width="10" height="43" rx="4" ry="6" fill="url(#wrv)"/>
<path d="M248.5 1036.5H256M248.5 1040.5H256M248.5 1044.5H256M248.5 1048.5H256M248.5 1052.5H256M248.5 1056.5H256M248.5 1060.5H256" stroke="#ffd0d0" stroke-width="1" opacity=".75"/>
<!-- dial -->
<g clip-path="url(#dialclip)">
<circle cx="267.5" cy="1113" r="25.6" fill="#fff"/>
<circle cx="266.5" cy="1112" r="25.6" fill="#111"/>
<circle cx="266.5" cy="1112" r="24" fill="#f01010"/>
<g stroke="#ffe0e0" stroke-width=".6" opacity=".75" id="ticks"><path d="M274.5 1112.4L289.0 1113.1M274.3 1114.0L288.3 1117.5M273.7 1115.4L286.8 1121.6M272.9 1116.8L284.6 1125.4M271.9 1117.9L281.6 1128.7M270.6 1118.9L278.0 1131.3M269.2 1119.5L274.1 1133.2M267.7 1119.9L269.8 1134.3M266.1 1120.0L265.4 1134.5M264.5 1119.8L261.0 1133.8M263.1 1119.2L256.9 1132.3M261.7 1118.4L253.1 1130.1M260.6 1117.4L249.8 1127.1M259.6 1116.1L247.2 1123.5M259.0 1114.7L245.3 1119.6M258.6 1113.2L244.2 1115.3M258.5 1111.6L244.0 1110.9M258.7 1110.0L244.7 1106.5M259.3 1108.6L246.2 1102.4M260.1 1107.2L248.4 1098.6M261.1 1106.1L251.4 1095.3M262.4 1105.1L255.0 1092.7M263.8 1104.5L258.9 1090.8M265.3 1104.1L263.2 1089.7M266.9 1104.0L267.6 1089.5M268.5 1104.2L272.0 1090.2M269.9 1104.8L276.1 1091.7M271.3 1105.6L279.9 1093.9M272.4 1106.6L283.2 1096.9M273.4 1107.9L285.8 1100.5M274.0 1109.3L287.7 1104.4M274.4 1110.8L288.8 1108.7"/></g>
</g>
<!-- horizontal wheels -->
<g id="hw">
<rect x="304" y="1118" width="49" height="15" fill="#111"/><rect x="304" y="1118" width="48" height="14" fill="#fff"/><rect x="304" y="1118" width="47" height="13" fill="#000"/>
<rect x="306" y="1119.5" width="43" height="10" rx="6" ry="4" fill="url(#wrh)"/>
<path d="M316.5 1121V1128.5M320.5 1121V1128.5M324.5 1121V1128.5M328.5 1121V1128.5M332.5 1121V1128.5M336.5 1121V1128.5M340.5 1121V1128.5" stroke="#5a0000" stroke-width="1" opacity=".8"/>
<rect x="374" y="1118" width="49" height="15" fill="#111"/><rect x="374" y="1118" width="48" height="14" fill="#fff"/><rect x="374" y="1118" width="47" height="13" fill="#000"/>
<rect x="376" y="1119.5" width="43" height="10" rx="6" ry="4" fill="url(#wyh)"/>
<path d="M382.5 1121V1128.5M386.5 1121V1128.5M390.5 1121V1128.5M394.5 1121V1128.5M398.5 1121V1128.5M402.5 1121V1128.5M406.5 1121V1128.5M410.5 1121V1128.5M414.5 1121V1128.5" stroke="#4a4a00" stroke-width="1" opacity=".85"/>
<rect x="444" y="1118" width="49" height="15" fill="#111"/><rect x="444" y="1118" width="48" height="14" fill="#fff"/><rect x="444" y="1118" width="47" height="13" fill="#000"/>
<rect x="446" y="1119.5" width="43" height="10" rx="6" ry="4" fill="url(#wbh)"/>
<path d="M458.500 1121V1128.500M462.500 1121V1128.500M466.500 1121V1128.500M470.500 1121V1128.500M474.500 1121V1128.500" stroke="#c8c8ff" stroke-width="1" opacity=".8"/>
</g>
<g font-family="Liberation Sans, sans-serif" font-size="6.500" font-weight="bold" fill="#111" text-anchor="middle">
<text x="325.5" y="1140">ROTATE</text><text x="397.5" y="1140">PAN</text><text x="467.5" y="1140">ZOOM</text>
</g>
<!-- axes -->
<path d="M310.2 1044.5V1060" stroke="#4a4a4a" stroke-width="2.4"/>
<path d="M320 1065.6L330.8 1064.8" stroke="#555" stroke-width="2"/>
<path d="M296.8 1062.5L300 1064" stroke="#3c6a3c" stroke-width="2"/>
<polygon points="299.3,1060.2 310.2,1058.3 320.7,1060.4 320.7,1076.6 306.8,1077.6 299.3,1074.2" fill="#2a922f"/>
<polygon points="299.3,1060.2 310.2,1058.3 320.7,1060.4 308,1062" fill="#258a2a"/>
<g font-family="Liberation Sans, sans-serif" font-size="9" fill="#000" font-weight="bold">
<text transform="translate(310.8 1035.4) scale(1.25 1.03)">Z</text>
<text transform="translate(292.8 1060.2) scale(1.25 1.03)">Y</text>
<text transform="translate(337 1063.5) scale(1.25 1.03)">X</text>
</g>
</svg>
<!--WHEELS-END-->
<!-- ===== status bar ===== -->
<div id="status" class="a"></div>
<div class="t" style="left:2.500px;top:1145.500px">For Help, press F1</div>
<div class="t" style="left:1090px;top:1145px">Machine: STRIZH</div>
<div class="t" style="left:1388px;top:1145px">Rotation: 0.00/0.00/0.00</div>
<div class="a" style="left:1383px;top:1144px;width:1px;height:15px;background:#d6d2d0;box-shadow:1px 0 0 #fff"></div>
<div class="a" style="left:1856px;top:1144px;width:1px;height:15px;background:#d6d2d0;box-shadow:1px 0 0 #fff"></div>
<!-- ===== taskbar ===== -->
<div id="taskbar" class="a"></div>
<div id="tbtop" class="a"></div>
<!--TASKBAR-START-->
<style>
.tb2{position:absolute;top:1160px;height:38px;width:58px;border:1px solid #4d6282;border-radius:3px;background:linear-gradient(#c3d3e7,#b9cbe2 45%,#aec3dd 50%,#b7cae2);box-shadow:inset 0 0 0 1px rgba(255,255,255,.5);}
</style>
<div class="tb2" style="left:121px"></div>
<div class="tb2" style="left:307px"></div>
<div class="tb2" style="left:369px"></div>
<div class="tb2" style="left:435px;width:54px"></div><div class="tb2" style="left:431px;width:54px"></div>
<div class="tb2" style="left:493px"></div>
<div class="tb2" style="left:555px"></div>
<div class="tb2" style="left:617px;background:linear-gradient(#e3ebf5,#d6e1ef 45%,#cbd9ea 50%,#d6e2f0);border-color:#66799a"></div>
<svg id="tbicons" style="left:0;top:1160px" width="700" height="40" viewBox="0 1160 700 40">
<defs>
<radialGradient id="orb1" cx=".5" cy=".95" r=".7"><stop offset="0" stop-color="#4fd8f4"/><stop offset=".35" stop-color="#1a86c8"/><stop offset=".7" stop-color="#0c4f92"/><stop offset="1" stop-color="#0b3a72"/></radialGradient>
<linearGradient id="orb2" x1="0" y1="0" x2="0" y2="1"><stop offset="0" stop-color="#d3e0ec" stop-opacity=".95"/><stop offset="1" stop-color="#7f9bb8" stop-opacity=".55"/></linearGradient>
<linearGradient id="ieg" x1="0" y1="0" x2="0" y2="1"><stop offset="0" stop-color="#86e0fa"/><stop offset=".5" stop-color="#3db6ec"/><stop offset="1" stop-color="#2490d4"/></linearGradient>
<linearGradient id="fold" x1="0" y1="0" x2="0" y2="1"><stop offset="0" stop-color="#fbe9a8"/><stop offset="1" stop-color="#f1c757"/></linearGradient>
<linearGradient id="fstand" x1="0" y1="0" x2="0" y2="1"><stop offset="0" stop-color="#d6efff"/><stop offset="1" stop-color="#66aee0"/></linearGradient>
<radialGradient id="ffglobe" cx=".45" cy=".35" r=".7"><stop offset="0" stop-color="#6fc2f0"/><stop offset=".5" stop-color="#2a78c4"/><stop offset="1" stop-color="#12306e"/></radialGradient>
<linearGradient id="fffox" x1="0" y1="0" x2="0" y2="1"><stop offset="0" stop-color="#f8b02a"/><stop offset=".45" stop-color="#ee7a1a"/><stop offset="1" stop-color="#c6421a"/></linearGradient>
<radialGradient id="skg" cx=".4" cy=".3" r=".8"><stop offset="0" stop-color="#5fd0f6"/><stop offset=".6" stop-color="#1ba6e6"/><stop offset="1" stop-color="#0a86cc"/></radialGradient>
<linearGradient id="psg" x1="0" y1="0" x2="1" y2="1"><stop offset="0" stop-color="#2a7fd0"/><stop offset=".5" stop-color="#0f5aa8"/><stop offset="1" stop-color="#0a3f86"/></linearGradient>
<g id="firefox">
<circle cx="1.500" cy="-2.500" r="12.300" fill="url(#ffglobe)"/>
<path d="M-1 -11C2 -12.500 5 -11.500 6.500 -9.500C4.500 -9.500 3.500 -8 4.500 -6.500C7 -6 8.500 -4 8 -1.500C6 -2.500 4 -1.500 3.500 0.500C1.500 0 0 -1.500 -0.500 -3.500C-2.500 -4.500 -3 -7 -2 -8.500Z" fill="#6fc0ee" opacity=".55"/>
<path d="M-9.500 -12C-12.500 -8.500 -15.500 -4 -15.500 1C-15.500 9.500 -8.500 15.500 0 15.500C8.500 15.500 15.500 9 15.500 0.500C15.500 -3.500 14.500 -6.500 12.500 -9C13 -6.500 13 -4.500 12.300 -2.500C11.800 -4.500 10.800 -6 9.300 -7C10.800 -2 9.500 3 6.500 5.500C3.500 8 -1.500 8 -4.500 5C-2.500 5.300 -0.500 4.500 0.500 3C-1.500 3 -3.800 1.800 -4.800 -0.200C-5.800 -2.200 -5 -4.200 -3.500 -5.200C-5 -5.700 -6.500 -6.500 -7.500 -8.200C-8.300 -7.200 -8.600 -6 -8.300 -4.500C-10 -6.500 -10.500 -9.500 -9.500 -12Z" fill="url(#fffox)"/>
<path d="M-15.500 1C-15.500 9.500 -8.500 15.500 0 15.500C8.500 15.500 15.500 9 15.500 0.500C14 7.500 8 12.500 0 12.500C-8 12.500 -13.500 7.500 -15.500 1Z" fill="#b5381a" opacity=".55"/>
</g>
</defs>
<!-- start orb -->
<circle cx="26.800" cy="1180" r="17.300" fill="#21405f" opacity=".55"/>
<circle cx="26.800" cy="1180" r="16.500" fill="url(#orb1)"/>
<path d="M10.600 1178.500A16.300 16.300 0 0 1 43 1178.500C38 1181.500 33 1182 26.800 1181C20.500 1180 15.500 1179.500 10.600 1178.500Z" fill="url(#orb2)"/>
<path d="M20 1172.200C22.200 1170.600 24.800 1170.600 27.300 1172L25.800 1179.200C23.500 1178 21 1178 18.700 1179.400Z" fill="#e8542a"/>
<path d="M28.500 1172.600C30.800 1174 33.200 1174 35.600 1172.600L34 1180C31.700 1181.300 29.300 1181.200 27 1179.900Z" fill="#82bd3c"/>
<path d="M18.300 1180.700C20.600 1179.300 23.100 1179.400 25.500 1180.600L23.900 1188C21.600 1186.700 19.200 1186.800 16.800 1188.200Z" fill="#3c9ee2"/>
<path d="M26.700 1181.300C29 1182.600 31.400 1182.600 33.800 1181.300L32.200 1188.800C29.800 1190.100 27.400 1190 25.100 1188.700Z" fill="#f9c22e"/>
<!-- IE -->
<text x="77" y="1193.300" font-family="Liberation Sans, sans-serif" font-weight="bold" font-size="48" fill="url(#ieg)" stroke="#1a76bb" stroke-width=".5" textLength="27" lengthAdjust="spacingAndGlyphs">e</text>
<path d="M77.500 1194C72 1190.500 72.500 1181.500 81 1173.500C89 1166 98.500 1163.500 103 1166" fill="none" stroke="#f2c31c" stroke-width="3.200" stroke-linecap="round"/>
<path d="M77.200 1192.800C73.500 1189.500 74.300 1182 82 1174.700C89 1168 97.500 1165 101.500 1165.800" fill="none" stroke="#fde884" stroke-width="1" stroke-linecap="round"/>
<!-- explorer -->
<g>
<path d="M136 1169.500H147.500L149 1171.500H159V1193H136Z" fill="#e9bd52"/>
<rect x="137" y="1168" width="9" height="4" fill="#fff"/><rect x="138" y="1168.200" width="3" height="2.200" fill="#1fa24a"/>
<path d="M141.500 1172.500H152L153.500 1174.500H163V1194H141.500Z" fill="#f0cb6a"/>
<rect x="143" y="1171.200" width="9" height="4" fill="#fff"/><rect x="146.500" y="1171.400" width="3" height="2.200" fill="#d0501a"/>
<path d="M136 1176.500H152.500L154.500 1174.800H166.500V1194.500H136Z" fill="url(#fold)" stroke="#d9a93e" stroke-width=".5"/>
<rect x="153.500" y="1172.800" width="11" height="3" fill="#fff"/><rect x="154.500" y="1173" width="3" height="2.200" fill="#2a78c8"/>
<path d="M140 1195.200V1185.500Q140 1183.500 142 1183.500H161Q163 1183.500 163 1185.500V1195.200H157V1189.500H146V1195.200Z" fill="url(#fstand)" stroke="#5a9fd4" stroke-width=".6"/>
</g>
<!-- sticky notes -->
<polygon points="203,1168 216.500,1170.500 211.500,1189.500 197,1184.500" fill="#b4dea0" opacity=".95"/>
<polygon points="205.500,1173 220.500,1174.500 220,1190.500 205,1188.500" fill="#b9d8f3"/>
<polygon points="208.500,1176.500 223.600,1171.200 229,1185.500 213,1191.500" fill="#fbdc5a"/>
<polygon points="208.500,1176.500 223.600,1171.200 225.800,1177 210.500,1182" fill="#fde68a"/>
<!-- firefox 1 -->
<use href="#firefox" transform="translate(275 1179.500)"/>
<!-- skype -->
<g>
<circle cx="331.500" cy="1172.500" r="8.500" fill="url(#skg)"/><circle cx="342" cy="1185.500" r="8.500" fill="url(#skg)"/><circle cx="336.800" cy="1179" r="12.800" fill="url(#skg)"/>
<text x="336.800" y="1188.300" font-family="Liberation Sans, sans-serif" font-weight="bold" font-size="25" fill="#fff" text-anchor="middle">S</text>
</g>
<!-- black pic -->
<defs><linearGradient id="bp1" x1="0" y1="0" x2="1" y2="0"><stop offset="0" stop-color="#8e8e8e"/><stop offset=".5" stop-color="#d8d8d8"/><stop offset="1" stop-color="#f4f4f4"/></linearGradient>
<linearGradient id="bp2" x1="0" y1="0" x2="1" y2="1"><stop offset="0" stop-color="#f2f2f2"/><stop offset=".6" stop-color="#c8c8c8"/><stop offset="1" stop-color="#8a8a8a"/></linearGradient></defs>
<rect x="383.200" y="1164.200" width="31.700" height="31.400" fill="#060606"/>
<polygon points="383.2,1164.4 393.4,1164.4 394.7,1169.2 398.1,1173.4 405.9,1173.0 403.5,1177.3 397.8,1178.4 390.7,1177.8 385.3,1175.3 383.2,1171.9" fill="url(#bp1)"/>
<polygon points="405.9,1180.3 414.7,1174.6 414.7,1180.3 407.6,1187.1 404.6,1183.7" fill="#7e7e7e"/>
<polygon points="385.3,1175.7 390.7,1178.0 394.7,1179.1 391.0,1181.4 386.3,1180.3" fill="#2a1416"/>
<path d="M384.6 1182.7 C388.3 1179.0 397.1 1178.3 402.5 1181.0 C406.9 1183.7 406.9 1189.8 403.2 1193.2 C399.8 1194.6 390.3 1188.5 384.6 1182.7Z" fill="url(#bp2)"/>
<!-- red creature (IrfanView) -->
<polygon points="443.2,1168.2 445.9,1169.2 448.2,1171.2 450.3,1168.2 452.6,1165.4 454.0,1168.2 454.3,1171.5 457.4,1172.6 458.4,1168.8 459.4,1166.1 462.8,1167.1 463.5,1170.2 461.8,1174.9 464.1,1177.6 468.2,1178.3 473.6,1178.6 474.0,1181.4 471.9,1183.2 467.5,1184.1 467.4,1186.4 468.9,1188.1 473.3,1188.8 472.9,1190.8 468.2,1190.8 465.5,1187.8 462.8,1189.8 461.4,1194.6 458.0,1196.3 455.0,1195.6 454.3,1191.9 455.3,1188.5 452.3,1184.7 447.9,1183.1 444.5,1183.9 442.1,1182.0 442.8,1179.3 445.5,1178.3 448.9,1178.0 447.9,1175.6 446.2,1173.9 446.5,1171.9 443.8,1170.5" fill="#f50a0a"/>
<polygon points="450.3,1168.2 452.6,1165.4 454.0,1168.2 453.8,1171.2 450.9,1171.5" fill="#a30808"/>
<polygon points="446.5,1172.8 450.3,1170.7 453.4,1169.4 453.6,1171.3 450.3,1172.9 447.4,1174.7" fill="#1c1418"/>
<!-- firefox 2 -->
<use href="#firefox" transform="translate(523.300 1179.500)"/>
<!-- Ps -->
<polygon points="570.500,1166.500 596,1165 598.500,1167.500 598.500,1192.500 573,1192.500 570.500,1190" fill="#0a3a7a"/>
<polygon points="570.500,1166.500 596,1165 596,1190 570.500,1190" fill="url(#psg)"/>
<text x="576.800" y="1183.600" font-family="Liberation Sans, sans-serif" font-size="16.200" fill="#7fd0f8" stroke="#7fd0f8" stroke-width=".5" textLength="16.500" lengthAdjust="spacingAndGlyphs">Ps</text>
<!-- DP -->
<g font-family="Liberation Serif, serif" fill="#e23a1a">
<text x="631" y="1182.800" font-size="27" font-weight="bold" textLength="15.500" lengthAdjust="spacingAndGlyphs">D</text>
<text x="643.500" y="1182.800" font-size="28" font-weight="bold" font-style="italic" textLength="20" lengthAdjust="spacingAndGlyphs">P</text>
<text x="645" y="1190.300" font-size="9" font-style="italic" font-weight="bold" fill="#d24a30" textLength="15.500" lengthAdjust="spacingAndGlyphs">Desk</text>
<text x="645.500" y="1197.200" font-size="9" font-style="italic" font-weight="bold" fill="#d24a30" textLength="17" lengthAdjust="spacingAndGlyphs">Proto</text>
</g>
</svg>
<!-- tray -->
<div class="a" style="left:1897px;top:1161px;width:23px;height:39px;background:linear-gradient(135deg,#8295ad,#5f7088 55%,#7d8ea6);border-left:1px solid #3c4a5e;box-shadow:inset 1px 0 0 #a4b4c8, inset 0 1px 0 #9fb0c6"></div>
<div class="t" style="left:1697px;top:1171px;font-size:12px;line-height:14px;color:#fff;letter-spacing:-.8px">RU</div>
<div class="t" style="left:1845px;top:1166px;font-size:12px;line-height:14px;color:#fff;letter-spacing:-.65px">17:57</div>
<div class="t" style="left:1830px;top:1183px;font-size:12px;line-height:14px;color:#fff;letter-spacing:-.62px">13.07.2012</div>
<svg style="left:1720px;top:1168px" width="100" height="26" viewBox="1720 1168 100 26">
<polygon points="1728.500,1183.500 1737,1183.500 1732.800,1178.800" fill="#fff"/>
<path d="M1750.500 1174V1190" stroke="#fff" stroke-width="1.600"/>
<path d="M1752 1175C1755 1173.500 1757 1176.500 1760 1175.500C1762 1175 1763 1176 1764.500 1176.500V1183C1762 1182 1760 1184 1757.500 1183C1755.500 1182 1754 1182.500 1752 1183.500Z" fill="#f4f4f4"/>
<circle cx="1760.500" cy="1186" r="4.600" fill="#e03a2a" stroke="#fff" stroke-width=".8"/>
<path d="M1758.500 1184L1762.500 1188M1762.500 1184L1758.500 1188" stroke="#fff" stroke-width="1.400"/>
<path d="M1773.500 1186.500H1775.500V1188.500H1773.500ZM1777 1184H1779.500V1188.500H1777ZM1781 1181H1783.500V1188.500H1781ZM1785 1177.500H1788V1188.500H1785Z" fill="#fff"/>
<path d="M1797.500 1178H1800.500L1805 1173.500V1188.500L1800.500 1184H1797.500Z" fill="#fff"/>
<path d="M1807 1177.500C1808.500 1179.500 1808.500 1182.500 1807 1184.500M1809.500 1175.500C1812 1178.500 1812 1183.500 1809.500 1186.500" fill="none" stroke="#fff" stroke-width="1.200"/>
</svg>
<!--TASKBAR-END-->
<!--DIALOG-START-->
<style>
#dlg{left:1177px;top:735px;width:534px;height:313px;border:1px solid #1c1c1c;border-radius:6px 6px 0 0;background:#f0f0f0;box-shadow:inset 1px 1px 0 0 #fff, inset -2px 0 0 0 #a4d8ef, inset 0 -2px 0 0 #8ec6de, inset 2px 0 0 0 #d3e3f1;overflow:hidden;}
#dlgcap{left:1px;top:1px;width:532px;height:23px;background:linear-gradient(#eaf1f9 0,#9db6d5 1.5px,#a4bddb 8px,#b2cae6 15px,#bad2ee 23px);border-radius:5px 5px 0 0;}
#dlgtitle{left:1184px;top:742px;font-size:11.6px;line-height:14px;color:#000;letter-spacing:.02px}
.tab{position:absolute;top:770px;height:17px;border:1px solid #898c95;border-bottom:none;background:linear-gradient(#f2f2f2,#ebebeb 50%,#dddddd 51%,#cfcfcf);box-sizing:border-box;}
.tabt{top:773px}
#tabpage{left:1186px;top:787px;width:514px;height:221px;border:1px solid #898c95;background:#fff;}
.grp{position:absolute;border:1px solid #d5dfe5;border-radius:3px;box-sizing:border-box;}
.gl{background:#fff;padding:0 2px;}
.ed{position:absolute;width:60px;height:20px;box-sizing:border-box;border:1px solid #e3e9ef;border-top-color:#abadb3;background:#fff;}
.ed.dis{border-color:#afafaf;border-radius:1px}
.cb{position:absolute;width:13px;height:13px;box-sizing:border-box;border:1px solid #8e8f8f;background:linear-gradient(135deg,#d4d4d4,#f3f3f3);box-shadow:inset 0 0 0 1px #f4f4f4, inset 0 0 0 2px #bcbcbc;}
.btn{position:absolute;top:1018px;width:73px;height:21px;box-sizing:border-box;border:1px solid #707070;border-radius:3px;background:linear-gradient(#f2f2f2,#ebebeb 48%,#dddddd 52%,#cfcfcf);box-shadow:inset 0 0 0 1px #fcfcfc;}
.btnt{top:1022.5px;width:73px;text-align:center;font-size:11px;letter-spacing:-.15px}
</style>
<div id="dlg" class="a"><div id="dlgcap" class="a"></div></div>
<div id="dlgtitle" class="t">Part Parameters - 'Part set by wizard'</div>
<!-- close button -->
<div class="a" style="left:1677px;top:740px;width:29px;height:15px;border:1px solid #431a15;border-radius:3px;background:linear-gradient(#eab4a6 0,#e39a88 45%,#cf4e36 50%,#d5644e 80%,#e29a86 100%);box-shadow:inset 0 0 0 1px rgba(255,255,255,.45)"></div>
<svg style="left:1686px;top:743px" width="12" height="10" viewBox="0 0 12 10"><path d="M1.5 1L4 1L6 3.2L8 1L10.5 1L7.4 5L10.5 9L8 9L6 6.8L4 9L1.5 9L4.6 5Z" fill="#fff" stroke="#5a2a26" stroke-width=".8"/></svg>
<!-- tabs -->
<div id="tabpage" class="a"></div>
<div class="tab" style="left:1188px;width:48px"></div>
<div class="tab" style="left:1299px;width:48px"></div>
<div class="tab" style="left:1347px;width:55px"></div>
<div class="tab" style="left:1402px;width:51px"></div>
<div class="tab" style="left:1453px;width:56px"></div>
<div class="a" style="left:1235px;top:767px;width:65px;height:21px;border:1px solid #898c95;border-bottom:none;background:#fff;box-sizing:border-box"></div>
<div class="t tabt" style="left:1193px">General</div>
<div class="t" style="left:1243px;top:771px">Transform</div>
<div class="t tabt" style="left:1303px">Support</div>
<div class="t tabt" style="left:1353px">Segment</div>
<div class="t tabt" style="left:1407px">Ambient</div>
<div class="t tabt" style="left:1459px">Translate</div>
<!-- groups -->
<div class="grp" style="left:1198px;top:806px;width:116px;height:126px"></div>
<div class="grp" style="left:1325px;top:806px;width:183px;height:91px"></div>
<div class="grp" style="left:1519px;top:806px;width:174px;height:91px"></div>
<div class="grp" style="left:1325px;top:909px;width:183px;height:78px"></div>
<div class="grp" style="left:1519px;top:909px;width:174px;height:78px"></div>
<div class="t gl" style="left:1205px;top:801px">1. Scale</div>
<div class="t gl" style="left:1332px;top:801px">2. Mirror</div>
<div class="t gl" style="left:1526px;top:801px">3. Rotation</div>
<div class="t gl" style="left:1332px;top:904px">4. Inverse milling</div>
<div class="t gl" style="left:1526px;top:904px">5. Centre</div>
<!-- scale -->
<div class="t" style="left:1218px;top:824px">X</div>
<div class="t" style="left:1218px;top:847px">Y</div>
<div class="t" style="left:1218px;top:869px">Z</div>
<div class="ed" style="left:1238px;top:820px"></div>
<div class="ed dis" style="left:1238px;top:843px"></div>
<div class="ed dis" style="left:1238px;top:865px"></div>
<div class="t" style="left:1244px;top:824px;letter-spacing:-.1px">1.00000</div>
<div class="t" style="left:1244px;top:847px;letter-spacing:-.1px;color:#8b8b8b">1.00000</div>
<div class="t" style="left:1244px;top:869px;letter-spacing:-.1px;color:#8b8b8b">1.00000</div>
<div class="cb" style="left:1238px;top:901px"></div>
<svg style="left:1240px;top:902px" width="10" height="10" viewBox="0 0 10 10"><path d="M1.6 4.6L4 8L8.2 1.2" fill="none" stroke="#31347c" stroke-width="1.9"/></svg>
<div class="t" style="left:1253px;top:902px">Uniform</div>
<!-- mirror -->
<div class="cb" style="left:1343px;top:824px"></div>
<div class="cb" style="left:1343px;top:847px"></div>
<div class="cb" style="left:1343px;top:870px"></div>
<div class="t" style="left:1358px;top:825px;letter-spacing:-.05px">In Y-Z plane, along X-axis</div>
<div class="t" style="left:1358px;top:848px;letter-spacing:-.05px">In X-Z plane, along Y-axis</div>
<div class="t" style="left:1358px;top:871px;letter-spacing:-.05px">In X-Y plane, along Z-axis</div>
<!-- rotation -->
<div class="t" style="left:1534px;top:824px">X</div>
<div class="t" style="left:1534px;top:847px">Y</div>
<div class="t" style="left:1534px;top:869px">Z</div>
<div class="ed" style="left:1556px;top:820px"></div>
<div class="ed" style="left:1556px;top:843px"></div>
<div class="ed" style="left:1556px;top:865px"></div>
<div class="t" style="left:1561px;top:824px;letter-spacing:.25px">0.00</div>
<div class="t" style="left:1561px;top:847px;letter-spacing:.25px">0.00</div>
<div class="t" style="left:1561px;top:869px;letter-spacing:.25px">0.00</div>
<div class="t" style="left:1626px;top:824px">degrees</div>
<div class="t" style="left:1626px;top:847px">degrees</div>
<div class="t" style="left:1626px;top:870px">degrees</div>
<!-- inverse milling -->
<div class="cb" style="left:1343px;top:923px"></div>
<div class="t" style="left:1358px;top:924px">Male to female</div>
<svg style="left:1360px;top:948px" width="125" height="20" viewBox="1360 948 125 20">
<path d="M1363.5 962.5V956L1371.5 956L1378 952.2H1384L1390.5 956L1397 956V962.5Z" fill="#f7f700" stroke="#8a8a3a" stroke-width=".7"/>
<path d="M1411 956.3H1416V954L1420.5 957.5L1416 961V958.7H1411Z" fill="#000"/>
<rect x="1433.5" y="951.8" width="45" height="11.4" fill="#f7f700"/>
<path d="M1440.3 952.4H1471.6V956.6L1460 959L1456 961L1452 959L1440.3 956.6Z" fill="#fff" stroke="#7a7a50" stroke-width=".7"/>
</svg>
<!-- centre -->
<div class="cb" style="left:1534px;top:923px;border-color:#3c7fb1;background:linear-gradient(135deg,#aed9f3,#e4f3fb);box-shadow:inset 0 0 0 1px #def1fb, inset 0 0 0 2px #8fc8ea"></div>
<div class="t" style="left:1549px;top:924px">Center geometry</div>
<svg style="left:1545px;top:940px" width="80" height="40" viewBox="1545 940 80 40">
<path d="M1552.500 962C1559 960.500 1563.500 958.500 1567.500 955.300C1571.500 958.500 1576 960.500 1582.500 962C1576 964 1571.500 966.500 1567.500 969.200C1563.500 966.500 1559 964 1552.500 962Z" fill="#f4f400" stroke="#f4f400" stroke-width="1.200" stroke-linejoin="round"/>
<path d="M1548 962.3H1587M1567.5 950V975" stroke="#000" stroke-width="1"/>
<path d="M1588 951C1588 947.5 1592 947 1595 946.5C1598 944 1604 944.5 1607 946.5C1611 946 1617 947.5 1616.5 951C1617 954.5 1611 955 1608 955.5C1604 958 1598 957.5 1595 956C1591 956 1588 954.5 1588 951Z" fill="#7b7818"/>
<path d="M1603 950.5L1581 957.2M1585.5 952.8L1580.8 957.3L1587 958.6" fill="none" stroke="#d81e1e" stroke-width="1"/>
<text x="1565" y="950" font-family="Liberation Sans, sans-serif" font-size="7" font-weight="bold" fill="#000">Z</text>
<text x="1588" y="965" font-family="Liberation Sans, sans-serif" font-size="7" font-weight="bold" fill="#000">Y</text>
</svg>
<!-- cursor -->
<svg style="left:1554px;top:922px" width="14" height="22" viewBox="0 0 14 22"><path d="M1 1V17.5L4.8 13.8L7.6 20.2L10 19.2L7.2 12.9H12.2Z" fill="#fff" stroke="#000" stroke-width="1"/></svg>
<!-- buttons -->
<div class="btn" style="left:1387px;border-color:#3c7fb1;box-shadow:inset 0 0 0 1px #48d8fb,inset 0 0 0 2px #bdeefc;background:linear-gradient(#eaf6fd,#d9f0fc 48%,#bee6fd 52%,#a7d9f5)"></div>
<div class="btn" style="left:1468px"></div>
<div class="btn" style="left:1549px"></div>
<div class="btn" style="left:1630px"></div>
<div class="t btnt" style="left:1387px">OK</div>
<div class="t btnt" style="left:1468px">Отмена</div>
<div class="t btnt" style="left:1549px">Применить</div>
<div class="t btnt" style="left:1630px">Справка</div>
<!--DIALOG-END-->
</body>
</html>
